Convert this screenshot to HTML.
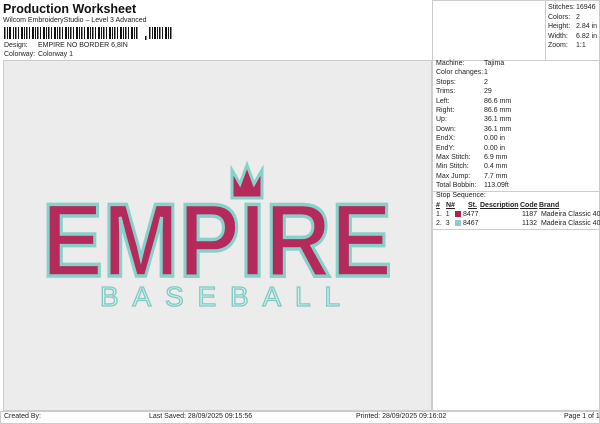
<!DOCTYPE html>
<html><head><style>
*{margin:0;padding:0;box-sizing:border-box}
body{width:600px;height:424px;background:#fff;font-family:"Liberation Sans",Arial,sans-serif;color:#222;position:relative;overflow:hidden;font-size:7px}
.a{position:absolute;white-space:nowrap}
</style></head><body>
<div class="a" style="left:3px;top:2px;font-size:12.5px;font-weight:bold;color:#111">Production Worksheet</div>
<div class="a" style="left:3px;top:17px;font-size:7px">Wilcom EmbroideryStudio – Level 3 Advanced</div>
<svg class="a" style="left:4px;top:27px" width="170" height="13">
<g fill="#111">
<rect x="0" y="0" width="1.5" height="12"/><rect x="3" y="0" width="1" height="12"/><rect x="5" y="0" width="2" height="12"/><rect x="9" y="0" width="1" height="12"/><rect x="11" y="0" width="1.5" height="12"/><rect x="14" y="0" width="1" height="12"/><rect x="17" y="0" width="2" height="12"/><rect x="20" y="0" width="1" height="12"/><rect x="22" y="0" width="1.5" height="12"/><rect x="25" y="0" width="1" height="12"/><rect x="28" y="0" width="2" height="12"/><rect x="31" y="0" width="1" height="12"/><rect x="33" y="0" width="1.5" height="12"/><rect x="36" y="0" width="1" height="12"/><rect x="39" y="0" width="2" height="12"/><rect x="42" y="0" width="1" height="12"/><rect x="44" y="0" width="1.5" height="12"/><rect x="47" y="0" width="1" height="12"/><rect x="50" y="0" width="2" height="12"/><rect x="53" y="0" width="1" height="12"/><rect x="55" y="0" width="1.5" height="12"/><rect x="58" y="0" width="1" height="12"/><rect x="61" y="0" width="2" height="12"/><rect x="64" y="0" width="1" height="12"/><rect x="66" y="0" width="1.5" height="12"/><rect x="69" y="0" width="1" height="12"/><rect x="72" y="0" width="2" height="12"/><rect x="75" y="0" width="1" height="12"/><rect x="77" y="0" width="1.5" height="12"/><rect x="80" y="0" width="1" height="12"/><rect x="83" y="0" width="2" height="12"/><rect x="86" y="0" width="1" height="12"/><rect x="88" y="0" width="1.5" height="12"/><rect x="91" y="0" width="1" height="12"/><rect x="94" y="0" width="2" height="12"/><rect x="97" y="0" width="1" height="12"/><rect x="99" y="0" width="1.5" height="12"/><rect x="102" y="0" width="1" height="12"/><rect x="105" y="0" width="2" height="12"/><rect x="108" y="0" width="1" height="12"/><rect x="110" y="0" width="1.5" height="12"/><rect x="113" y="0" width="1" height="12"/><rect x="116" y="0" width="2" height="12"/><rect x="119" y="0" width="1" height="12"/><rect x="121" y="0" width="1.5" height="12"/><rect x="124" y="0" width="1" height="12"/><rect x="127" y="0" width="2" height="12"/><rect x="130" y="0" width="1" height="12"/><rect x="132" y="0" width="1.5" height="12"/>
<rect x="141" y="9" width="1.5" height="4"/>
<rect x="145" y="0" width="1.5" height="12"/><rect x="148" y="0" width="1" height="12"/><rect x="150" y="0" width="2" height="12"/><rect x="153" y="0" width="1" height="12"/><rect x="155" y="0" width="1.5" height="12"/><rect x="158" y="0" width="1" height="12"/><rect x="161" y="0" width="2" height="12"/><rect x="164" y="0" width="1" height="12"/><rect x="166" y="0" width="1.5" height="12"/>
</g></svg>
<div class="a" style="left:4px;top:42px">Design:</div>
<div class="a" style="left:38px;top:42px">EMPIRE NO BORDER 6,8IN</div>
<div class="a" style="left:4px;top:51px">Colorway:</div>
<div class="a" style="left:38px;top:51px">Colorway 1</div>

<div class="a" style="left:432px;top:0;width:168px;height:61px;border:1px solid #ccc"></div>
<div class="a" style="left:545px;top:0;width:1px;height:61px;background:#ccc"></div>
<div class="a" style="left:548px;top:3px;line-height:9.5px">Stitches:<br>Colors:<br>Height:<br>Width:<br>Zoom:</div>
<div class="a" style="left:576px;top:3px;line-height:9.5px">16946<br>2<br>2.84 in<br>6.82 in<br>1:1</div>

<div class="a" style="left:3px;top:60px;width:429px;height:351px;background:#ececec;border:1px solid #ccc"></div>
<svg class="a" style="left:0;top:0" width="432" height="411">
<polygon points="232,198 232,170 240,184 247,165 254,184 262,170 262,198" fill="#b42a5a" stroke="#86d2ca" stroke-width="3" stroke-linejoin="miter"/>
<text x="42" y="276" font-family="Liberation Sans" font-weight="bold" font-size="104" textLength="350" lengthAdjust="spacingAndGlyphs" fill="#b42a5a" stroke="#86d2ca" stroke-width="3.5">EMPIRE</text>
<text x="100" y="306" font-family="Liberation Sans" font-size="28" textLength="240" lengthAdjust="spacing" fill="#d6efec" stroke="#7ecac3" stroke-width="1.3">BASEBALL</text>
</svg>

<div class="a" style="left:432px;top:60px;width:168px;height:351px;border:1px solid #ccc"></div>
<div class="a" style="left:436px;top:59px;line-height:9.4px">Machine:<br>Color changes:<br>Stops:<br>Trims:<br>Left:<br>Right:<br>Up:<br>Down:<br>EndX:<br>EndY:<br>Max Stitch:<br>Min Stitch:<br>Max Jump:<br>Total Bobbin:</div>
<div class="a" style="left:484px;top:59px;line-height:9.4px">Tajima<br>1<br>2<br>29<br>86.6 mm<br>86.6 mm<br>36.1 mm<br>36.1 mm<br>0.00 in<br>0.00 in<br>6.9 mm<br>0.4 mm<br>7.7 mm<br>113.09ft</div>
<div class="a" style="left:432px;top:191px;width:168px;height:1px;background:#ccc"></div>
<div class="a" style="left:436px;top:192px">Stop Sequence:</div>
<div class="a" style="left:436px;top:202px;font-weight:bold;text-decoration:underline">#</div>
<div class="a" style="left:446px;top:202px;font-weight:bold;text-decoration:underline">N#</div>
<div class="a" style="left:468px;top:202px;font-weight:bold;text-decoration:underline">St.</div>
<div class="a" style="left:480px;top:202px;font-weight:bold;text-decoration:underline">Description</div>
<div class="a" style="left:520px;top:202px;font-weight:bold;text-decoration:underline">Code</div>
<div class="a" style="left:539px;top:202px;font-weight:bold;text-decoration:underline">Brand</div>
<div class="a" style="left:436px;top:211px">1.&nbsp; 1</div>
<div class="a" style="left:455px;top:211px;width:6px;height:6px;background:#b81e4e"></div>
<div class="a" style="left:463px;top:211px">8477</div>
<div class="a" style="left:522px;top:211px">1187&nbsp; Madeira Classic 40</div>
<div class="a" style="left:436px;top:220px">2.&nbsp; 3</div>
<div class="a" style="left:455px;top:220px;width:6px;height:6px;background:#8fc9d8"></div>
<div class="a" style="left:463px;top:220px">8467</div>
<div class="a" style="left:522px;top:220px">1132&nbsp; Madeira Classic 40</div>
<div class="a" style="left:432px;top:229px;width:168px;height:1px;background:#ccc"></div>

<div class="a" style="left:0;top:411px;width:600px;height:13px;border:1px solid #ccc"></div>
<div class="a" style="left:4px;top:413px">Created By:</div>
<div class="a" style="left:149px;top:413px">Last Saved: 28/09/2025 09:15:56</div>
<div class="a" style="left:356px;top:413px">Printed: 28/09/2025 09:16:02</div>
<div class="a" style="left:564px;top:413px">Page 1 of 1</div>
</body></html>
